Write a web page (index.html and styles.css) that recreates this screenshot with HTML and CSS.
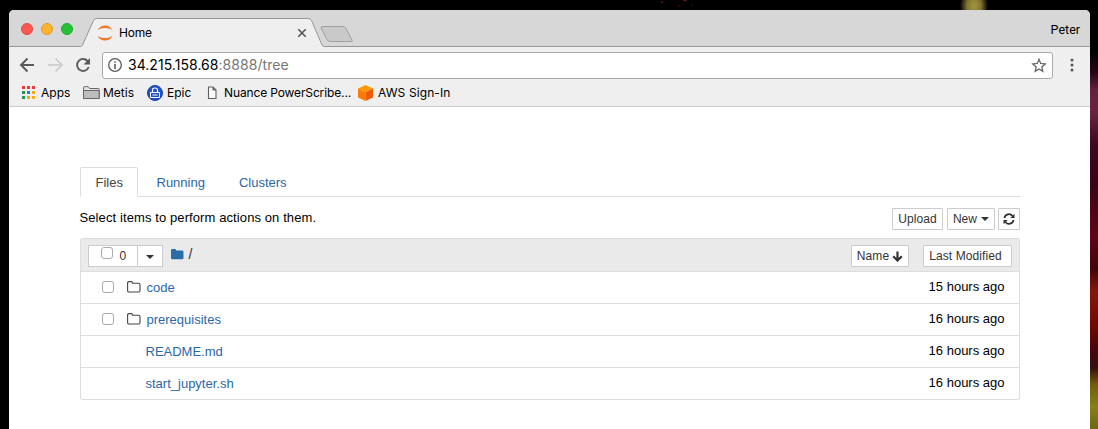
FILE: index.html
```html
<!DOCTYPE html>
<html lang="en">
<head>
<meta charset="utf-8">
<title>Home</title>
<link rel="stylesheet" href="styles.css">
</head>
<body>
<div class="desktop">
<main class="window">
  <header class="titlebar">
    <div class="lights"><i class="light close"></i><i class="light minimize"></i><i class="light maximize"></i></div>
    <div class="tab">
      <svg class="tab-shape" width="275" height="29" viewBox="0 0 275 29"><path d="M0 28.5 L1.5 27.5 L12.5 2.5 Q13.5.5 15.5.5 H227 Q229.500.5 230.500 2.5 L241 27 Q242 28.500 244 28.500 V29 H0Z" fill="#efefef"/><path d="M0 28.5 L1.5 27 L12.5 2.5 Q13.5.5 15.5.5 H227 Q229.500.5 230.500 2.500 L241 27 Q242 28.500 244 28.500" fill="none" stroke="#969696"/><path d="M242 8.500 H262 Q264 8.500 265 10.500 L271 22 Q272 23.500 270 23.500 H249 Q247 23.500 246 21.500 L240 10 Q239.500 8.500 242 8.500Z" fill="#c9c9c9" stroke="#a0a0a0"/></svg>
      <div class="tab-content">
        <svg width="16" height="16" viewBox="0 0 16 16"><path d="M.7 5.300 C3-1.200 13-1.200 15.300 5.300 C12 2.200 4 2.200.7 5.300ZM.7 10.700 C4 13.800 12 13.800 15.300 10.700 C13 17.200 3 17.200.7 10.700Z" fill="#f37726"/></svg>
        <span class="tab-title">Home</span>
        <svg class="tab-close" width="10" height="10" viewBox="0 0 10 10"><path d="M1.300 1.300 8.700 8.700M8.700 1.300 1.300 8.700" stroke="#555" stroke-width="1.600"/></svg>
      </div>
    </div>
    <span class="profile">Peter</span>
  </header>
  <nav class="toolbar">
    <svg class="nav-icons" width="72" height="18" viewBox="0 0 72 18" fill="none" stroke-width="1.900"><path d="M15 9H2.500M8.500 2.500 2 9 8.500 15.500" stroke="#5a5a5a"/><path d="M29 9H42.500M36.500 2.500 43 9 36.500 15.500" stroke="#d0d0d0"/><path d="M69 5.500 A6 6 0 1 0 69.700 11" stroke="#5a5a5a"/><path d="M71 2V8.500H64.500Z" fill="#5a5a5a"/></svg>
    <div class="address">
      <svg width="14" height="14" viewBox="0 0 14 14"><circle cx="7" cy="7" r="6.300" fill="none" stroke="#5a5a5a" stroke-width="1.300"/><path d="M6.200 3.200h1.600v1.600H6.200zM6.200 6h1.600v5H6.200z" fill="#5a5a5a"/></svg>
      <span class="url">34.215.158.68<span>:8888/tree</span></span>
      <svg class="star" width="16" height="15" viewBox="0 0 16 15"><path d="M8 1.300 9.700 5.500 14.200 5.900 10.800 8.900 11.800 13.300 8 11 4.200 13.300 5.200 8.900 1.800 5.900 6.300 5.500Z" fill="none" stroke="#666" stroke-width="1.300"/></svg>
    </div>
    <svg class="menu" width="4" height="14" viewBox="0 0 4 14" fill="#555"><circle cx="2" cy="2" r="1.500"/><circle cx="2" cy="7" r="1.500"/><circle cx="2" cy="12" r="1.500"/></svg>
  </nav>
  <nav class="bookmarks">
    <a class="bookmark apps"><svg width="14" height="14" viewBox="0 0 14 14"><path d="M0 0h3v3H0zM5 0h3v3H5zM10 0h3v3H10z" fill="#ef3b35"/><path d="M0 5h3v3H0zM0 10h3v3H0z" fill="#299354"/><path d="M5 5h3v3H5z" fill="#287de1"/><path d="M10 5h3v3H10zM5 10h3v3H5zM10 10h3v3H10z" fill="#f8a810"/></svg><span>Apps</span></a>
    <a class="bookmark metis"><svg width="17" height="14" viewBox="0 0 17 14"><path d="M.5 12.500V1.500Q.5.700 1.300.700H5.200L6.700 2.500H15.500Q16.200 2.500 16.200 3.500V12.500Z" fill="#e4e4e4" stroke="#666"/><path d="M.5 4.500H16.200V12.500H.5Z" fill="#bdbdbd" stroke="#666"/></svg><span>Metis</span></a>
    <a class="bookmark epic"><svg width="16" height="16" viewBox="0 0 16 16"><circle cx="8" cy="8" r="7.500" fill="#2152c8" stroke="#173f9b"/><path d="M5.500 7V5Q5.500 3 8 3T10.500 5V7" fill="none" stroke="#fff" stroke-width="1.200"/><path d="M3.500 7.500h9v5h-9z" fill="#2152c8" stroke="#fff"/><path d="M5.500 9.500h5v1h-5z" fill="#fff"/></svg><span>Epic</span></a>
    <a class="bookmark nuance"><svg width="10" height="14" viewBox="0 0 10 14"><path d="M1.500 1H6L9 4V12.500H1.500ZM6 1V4H9" fill="#fafafa" stroke="#606060" stroke-width="1.100"/></svg><span>Nuance PowerScribe...</span></a>
    <a class="bookmark aws"><svg width="15" height="16" viewBox="0 0 15 16"><path d="M7.500 0 15 3.500 7.500 7.200 0 3.500Z" fill="#ff9900"/><path d="M0 3.500 7.500 7.200V16L0 12.500Z" fill="#f97c08"/><path d="M15 3.500 7.500 7.200V16L15 12.500Z" fill="#ed5d09"/></svg><span>AWS Sign-In</span></a>
  </nav>
  <section class="notebook">
    <nav class="tabs"><a class="active">Files</a><a>Running</a><a>Clusters</a></nav>
    <div class="actions">
      <span class="hint">Select items to perform actions on them.</span>
      <button class="upload">Upload</button>
      <button class="new">New <i class="caret"></i></button>
      <button class="refresh"><svg width="12" height="12" viewBox="0 0 12 12"><path d="M1.400 5 A4.600 4.600 0 0 1 9.600 3M10.600 7 A4.600 4.600 0 0 1 2.400 9" fill="none" stroke="#333" stroke-width="1.700"/><path d="M11.500.8V5H7.300ZM.5 11.200V7H4.700Z" fill="#333"/></svg></button>
    </div>
    <div class="files">
      <div class="row head">
        <div class="select"><span class="all"><i class="check"></i><b>0</b></span><span class="drop"><i class="caret"></i></span></div>
        <svg class="root-folder" width="13" height="11" viewBox="0 0 13 11"><path d="M0 1.300Q0 0 1.300 0H4Q5.200 0 5.200 1.500H11.200Q12.500 1.500 12.500 2.800V9Q12.500 10.300 11.200 10.300H1.300Q0 10.300 0 9Z" fill="#296eaa"/></svg>
        <span class="root">/</span>
        <button class="name">Name <svg width="11" height="11" viewBox="0 0 11 11"><path d="M5.500.500V9.500M1.200 5.200 5.500 9.500 9.800 5.200" fill="none" stroke="#333" stroke-width="2.200"/></svg></button>
        <button class="modified">Last Modified</button>
      </div>
      <div class="row"><i class="check"></i><svg class="folder" width="14" height="12" viewBox="0 0 14 12"><path d="M.6 2Q.6.600 2 .600H4.300Q5.500.600 5.500 2.300H11.500Q13 2.300 13 3.700V9.500Q13 11 11.500 11H2Q.6 11 .6 9.500Z" fill="none" stroke="#444" stroke-width="1.100"/></svg><a>code</a><time>15 hours ago</time></div>
      <div class="row"><i class="check"></i><svg class="folder" width="14" height="12" viewBox="0 0 14 12"><path d="M.6 2Q.6.600 2 .600H4.300Q5.500.600 5.500 2.300H11.500Q13 2.300 13 3.700V9.500Q13 11 11.500 11H2Q.6 11 .6 9.500Z" fill="none" stroke="#444" stroke-width="1.100"/></svg><a>prerequisites</a><time>16 hours ago</time></div>
      <div class="row file"><a>README.md</a><time>16 hours ago</time></div>
      <div class="row file"><a>start_jupyter.sh</a><time>16 hours ago</time></div>
    </div>
  </section>
</main>
</div>
</body>
</html>
```
FILE: styles.css
```css
* { box-sizing: border-box; }
body { margin: 0; font-family: "Liberation Sans", sans-serif; font-size: 13px; color: #000; }
svg { display: block; flex: none; }
.desktop {
  height: 429px; overflow: hidden; padding: 10px 8px 0 9px;
  background:
    radial-gradient(circle at 662px 2px, #b90c18 0, transparent 1.5px),
    radial-gradient(circle at 685px 0, #d51920 0, transparent 2px),
    radial-gradient(circle at 679px 6px, #520813 0, transparent 1.5px),
    radial-gradient(circle at 692px 5px, #430711 0, transparent 1.5px),
    radial-gradient(ellipse 14px 20px at 974px 6px, #a39743 0, #81752f 50%, transparent 100%),
    linear-gradient(#000 0, #000 50px, #250614 72px, #64203f 90px, #6a2142 112px, #3d0923 145px, #390417 185px, #600515 235px, #420408 268px, #85170b 292px, #720802 325px, #480609 350px, #36100d 368px, #71600b 385px, #858016 407px, #6d6711 429px) right / 9px 100% no-repeat,
    #000;
}
.window { height: 430px; background: #fff; border-radius: 5px 5px 0 0; overflow: hidden; }
.titlebar { height: 37px; display: flex; background: #d7d7d7; border-bottom: 1px solid #969696; }
.lights { display: flex; gap: 8px; padding: 13px 0 0 12px; width: 72px; }
.light { width: 12px; height: 12px; border-radius: 50%; border: 1px solid; }
.close { background: #fc5650; border-color: #e1453f; }
.minimize { background: #fdb42c; border-color: #df9c27; }
.maximize { background: #24c138; border-color: #1aaa2c; }
.tab { display: grid; width: 275px; height: 29px; margin-top: 8px; }
.tab-shape, .tab-content { grid-area: 1 / 1; }
.tab-content { display: flex; align-items: center; z-index: 1; width: 226px; padding-left: 16px; height: 29px; }
.tab-title { margin-left: 6px; font: 12px/16px Inter, sans-serif; letter-spacing: -.2px; }
.tab-close { margin-left: auto; }
.profile { margin: 12px 10px 0 auto; font: 12.5px/16px Roboto, sans-serif; }
.toolbar { height: 36px; background: #efefef; display: flex; align-items: center; padding-left: 10px; }
.nav-icons { margin-right: 11px; }
.address { width: 951px; height: 27px; border: 1px solid #a9a9a9; border-radius: 3px; background: #fff; display: flex; align-items: center; padding: 0 5px; }
.url { margin-left: 6px; font: 14px/18px Inter, sans-serif; letter-spacing: .04px; }
.url span { color: #777; }
.star { margin-left: auto; }
.menu { margin-left: 17px; }
.bookmarks { height: 24px; background: #efefef; border-bottom: 1px solid #ccc; display: flex; padding: 1px 0 4px 13px; font: 12px/18px Inter, sans-serif; }
.bookmark { display: flex; align-items: center; gap: 4px; white-space: nowrap; }
.apps { width: 61px; gap: 5px; }
.metis { width: 64px; gap: 3px; }
.epic { width: 60px; }
.nuance { width: 151px; gap: 7px; letter-spacing: -.13px; }
.aws { gap: 5px; letter-spacing: .1px; }
.notebook { margin: 60px 70px 0 71px; }
.tabs { height: 30px; display: flex; gap: 3px; border-bottom: 1px solid #ddd; }
.tabs a { height: 30px; padding: 6px 14.5px 0; line-height: 18px; color: #2b67a6; border: 1px solid transparent; }
.tabs .active { width: 58px; color: #444; background: #fff; border-color: #ddd #ddd #fff; border-radius: 2px 2px 0 0; }
.actions { height: 41px; padding-top: 11px; display: flex; align-items: flex-start; }
.hint { margin: 0 auto 0 -.5px; line-height: 20px; letter-spacing: .1px; }
button { height: 22px; padding: 0 5px; border: 1px solid #ccc; border-radius: 1px; background: #fff; color: #333; font: 12px/20px "Liberation Sans", sans-serif; letter-spacing: .08px; display: flex; align-items: center; justify-content: center; white-space: nowrap; }
.upload { width: 51px; }
.new { width: 48px; margin: 0 3px 0 4px; gap: 4px; }
.refresh { width: 22px; }
.caret { border: 4px solid transparent; border-top-color: #333; border-bottom: 0; }
.files { height: 162px; border: 1px solid #ddd; border-radius: 2px; }
.row { height: 32px; display: flex; align-items: center; padding: 0 14.5px 0 21px; border-bottom: 1px solid #ddd; }
.row:last-child { border: 0; }
.head { height: 33px; background: #eaeaea; padding: 0 7px; }
.select { display: flex; width: 75px; height: 22px; margin: 2px 8px 0 0; border: 1px solid #ccc; background: #fff; }
.all { display: flex; width: 49px; padding-left: 12px; border-right: 1px solid #ccc; }
.all b { font: 12px/20px "Liberation Sans", sans-serif; margin-left: 6.5px; color: #333; }
.drop { display: flex; flex: 1; align-items: center; justify-content: center; padding-top: 2px; }
.check { width: 12px; height: 12px; margin-top: -2px; border: 1px solid #aaa; border-radius: 3px; background: #fff; flex: none; }
.all .check { margin-top: 1px; }
.root-folder { margin-top: -2px; }
.root { margin: -2px 0 0 4.5px; color: #333; font-size: 14px; }
.name { width: 58px; margin: 2px 14px 0 auto; gap: 3px; }
.modified { width: 89px; margin-top: 2px; padding: 0 9px 0 5px; }
.folder { margin: -2px 5.5px 0 13px; }
.row > a { color: #2b67a6; line-height: 18px; }
.row time { margin-left: auto; margin-top: -2px; line-height: 18px; }
.file { padding-left: 64.5px; }
```
